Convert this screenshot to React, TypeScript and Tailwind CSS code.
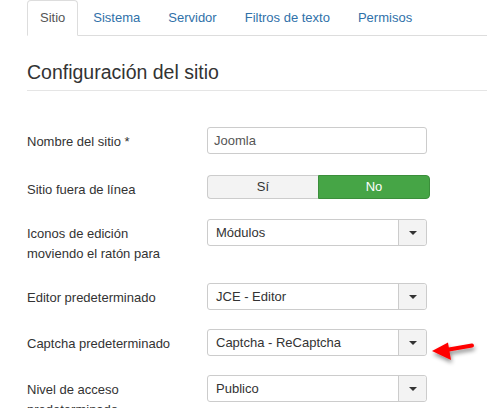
import React from "react";

const tabs = ["Sitio", "Sistema", "Servidor", "Filtros de texto", "Permisos"];

function Caret() {
  return (
    <svg width="8" height="4" viewBox="0 0 8 4" className="block">
      <path d="M0 0 L8 0 L4 4 Z" fill="#333" />
    </svg>
  );
}

function Select({ value }: { value: string }) {
  return (
    <div className="flex h-[27px] w-[220px] rounded-[3px] border border-[#ccc] bg-white text-[#333]">
      <div className="flex-1 pl-[8px] leading-[25px] truncate">{value}</div>
      <div className="flex w-[28px] items-center justify-center border-l border-[#ccc] bg-[#f3f3f3] rounded-r-[3px]">
        <Caret />
      </div>
    </div>
  );
}

function Row({
  label,
  children,
  mb = "mb-[19px]",
}: {
  label: React.ReactNode;
  children: React.ReactNode;
  mb?: string;
}) {
  return (
    <div className={`flex items-start ${mb}`}>
      <div className="w-[180px] shrink-0 pt-[5px] leading-[20px] text-[#333]">{label}</div>
      <div>{children}</div>
    </div>
  );
}

export default function App() {
  return (
    <div
      className="relative min-h-[408px] bg-white pl-[27px] text-[13px]"
      style={{ fontFamily: '"Liberation Sans", Arial, sans-serif' }}
    >
      <ul className="flex border-b border-[#ddd]">
        {tabs.map((t, i) => (
          <li
            key={t}
            className={`-mb-px mr-[2px] px-[12px] pt-[8px] pb-[8px] leading-[18px] border rounded-t-[4px] ${
              i === 0
                ? "border-[#ddd] border-b-white bg-white text-[#555]"
                : "border-transparent text-[#3071a9]"
            }`}
          >
            {t}
          </li>
        ))}
      </ul>

      <div className="mt-[18px] h-[37px] border-b border-[#e5e5e5] text-[19.5px] leading-[36px] text-[#333]">
        Configuración del sitio
      </div>

      <div className="mt-[36px]">
        <Row label="Nombre del sitio *" mb="mb-[21px]">
          <div className="h-[27px] w-[220px] rounded-[3px] border border-[#ccc] bg-white pl-[6px] leading-[25px] text-[#555]">
            Joomla
          </div>
        </Row>

        <Row label="Sitio fuera de línea">
          <div className="flex h-[24px] w-[223px]">
            <div className="flex-1 rounded-l-[4px] border border-[#ccc] border-r-0 bg-[#f3f3f3] text-center leading-[22px] text-[#333]">
              Sí
            </div>
            <div className="w-[112px] rounded-r-[4px] border border-[#3b8e3b] bg-[#46a546] text-center leading-[22px] text-white">
              No
            </div>
          </div>
        </Row>

        <Row
          label={
            <>
              Iconos de edición
              <br />
              moviendo el ratón para
            </>
          }
        >
          <Select value="Módulos" />
        </Row>

        <Row label="Editor predeterminado">
          <Select value="JCE - Editor" />
        </Row>

        <Row label="Captcha predeterminado">
          <Select value="Captcha - ReCaptcha" />
        </Row>

        <Row
          label={
            <>
              Nivel de acceso
              <br />
              predeterminado
            </>
          }
        >
          <Select value="Publico" />
        </Row>
      </div>

      <svg
        className="absolute left-[420px] top-[330px]"
        width="67"
        height="40"
        viewBox="420 330 67 40"
      >
        <defs>
          <filter id="sh" x="-30%" y="-50%" width="160%" height="220%">
            <feDropShadow dx="1" dy="3" stdDeviation="2" floodColor="#000" floodOpacity="0.45" />
          </filter>
        </defs>
        <g filter="url(#sh)">
          <path d="M446 350 L472 345.5" stroke="#f00" strokeWidth="4" strokeLinecap="round" />
          <path d="M432 351 L448 342.5 L451 360 Z" fill="#f00" />
        </g>
      </svg>
    </div>
  );
}
